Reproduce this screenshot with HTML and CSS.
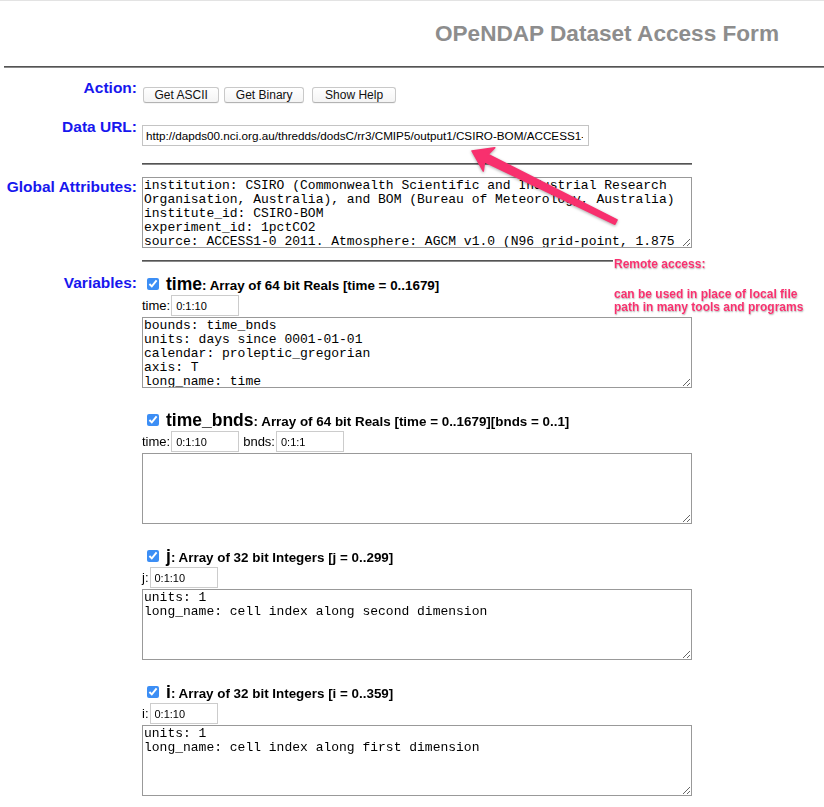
FILE: index.html
```html
<!DOCTYPE html>
<html lang="en">
<head>
<meta charset="utf-8">
<title>OPeNDAP Dataset Access Form</title>
<link rel="stylesheet" href="styles.css">
</head>
<body>
<div class="topline"></div>
<div class="page">
  <h1 class="title">OPeNDAP Dataset Access Form</h1>
  <hr class="rule rule-top">

  <form class="form">
    <div class="row row-action">
      <div class="label">Action:</div>
      <div class="content actions">
        <button type="button" class="btn btn-ascii">Get ASCII</button>
        <button type="button" class="btn btn-binary">Get Binary</button>
        <button type="button" class="btn btn-help">Show Help</button>
      </div>
    </div>

    <div class="row row-url">
      <div class="label">Data URL:</div>
      <div class="content url-wrap">
        <input class="url" type="text" value="http://dapds00.nci.org.au/thredds/dodsC/rr3/CMIP5/output1/CSIRO-BOM/ACCESS1-0/1pctCO2/fx/ocean/fx/r0i0p0/v20120412/areacello/areacello_fx_ACCESS1-0_1pctCO2_r0i0p0.nc">
      </div>
    </div>

    <hr class="rule rule-sep">

    <div class="row row-global">
      <div class="label label-global">Global Attributes:</div>
      <div class="content">
        <textarea class="attrs attrs-global">institution: CSIRO (Commonwealth Scientific and Industrial Research Organisation, Australia), and BOM (Bureau of Meteorology, Australia)
institute_id: CSIRO-BOM
experiment_id: 1pctCO2
source: ACCESS1-0 2011. Atmosphere: AGCM v1.0 (N96 grid-point, 1.875 degrees EW x approx 1.25 degree NS, 38 levels); ocean: NOAA/GFDL MOM4p1 (nominal 1.0 degree EW x 1.0 degrees NS, tripolar north of 65N, equatorial refinement to 1/3 degree from 10S to 10N, cosine dependent NS south of 25S, 50 levels); sea ice: CICE4.1; land: MOSES2 (1.875 degree EW x 1.25 degree NS, 4 levels)
model_id: ACCESS1-0
forcing: GHG, Oz, SA, Sl, Vl, BC, OC</textarea>
      </div>
    </div>

    <hr class="rule rule-sep rule-sep2">

    <div class="row row-vars">
      <div class="label">Variables:</div>
      <div class="content vars">
        <div class="var">
          <div class="var-head"><input class="chk" type="checkbox" checked><span class="vname">time</span>: Array of 64 bit Reals [time = 0..1679]</div>
          <div class="dims"><label class="dim">time:<input class="dim-in" type="text" value="0:1:10"></label></div>
          <textarea class="attrs">bounds: time_bnds
units: days since 0001-01-01
calendar: proleptic_gregorian
axis: T
long_name: time
standard_name: time</textarea>
        </div>

        <div class="var">
          <div class="var-head"><input class="chk" type="checkbox" checked><span class="vname">time_bnds</span>: Array of 64 bit Reals [time = 0..1679][bnds = 0..1]</div>
          <div class="dims"><label class="dim">time:<input class="dim-in" type="text" value="0:1:10"></label><label class="dim">bnds:<input class="dim-in" type="text" value="0:1:1"></label></div>
          <textarea class="attrs"></textarea>
        </div>

        <div class="var">
          <div class="var-head"><input class="chk" type="checkbox" checked><span class="vname">j</span>: Array of 32 bit Integers [j = 0..299]</div>
          <div class="dims"><label class="dim">j:<input class="dim-in" type="text" value="0:1:10"></label></div>
          <textarea class="attrs">units: 1
long_name: cell index along second dimension</textarea>
        </div>

        <div class="var">
          <div class="var-head"><input class="chk" type="checkbox" checked><span class="vname">i</span>: Array of 32 bit Integers [i = 0..359]</div>
          <div class="dims"><label class="dim">i:<input class="dim-in" type="text" value="0:1:10"></label></div>
          <textarea class="attrs">units: 1
long_name: cell index along first dimension</textarea>
        </div>
      </div>
    </div>
  </form>

  <svg class="arrow" viewBox="460 140 170 90" width="170" height="90" aria-hidden="true">
    <polygon points="472,150 494.8,146.7 488.1,153.5 617.1,218.8 614.9,223.2 484.5,160.7 483.3,170.1" fill="#f8306e" stroke="#f8306e" stroke-width="1.5" stroke-linejoin="round"/>
  </svg>

  <div class="note">
    <p class="note-title">Remote access:</p>
    <p class="note-body">can be used in place of local file<br>path in many tools and programs</p>
  </div>
</div>
</body>
</html>
```

FILE: styles.css
```css
* {
  box-sizing: border-box;
}

html,
body {
  margin: 0;
  padding: 0;
  background: #ffffff;
}

body {
  font-family: "Liberation Sans", Arial, Helvetica, sans-serif;
  color: #000000;
}

.topline {
  height: 1px;
  background: #e3e3e3;
}

.page {
  position: relative;
  width: 824px;
  min-height: 806px;
  padding-top: 20px;
}

.title {
  margin: 0 45px 0 0;
  text-align: right;
  font-size: 22.6px;
  line-height: 26px;
  font-weight: bold;
  color: #8d8d8d;
}

.rule {
  height: 2px;
  border: 0;
  border-top: 1px solid #545454;
  border-bottom: 1px solid #8a8a8a;
  margin: 0;
}

.rule-top {
  margin: 19px 0 0 4px;
}

.rule-sep {
  width: 550px;
  margin: 17px 0 0 142px;
}

.rule-sep2 {
  margin-top: 12px;
}

.form {
  margin: 0;
}

.row {
  display: flex;
  column-gap: 5px;
  align-items: flex-start;
}

.label {
  flex: 0 0 137px;
  text-align: right;
  font-size: 15.5px;
  line-height: 18px;
  font-weight: bold;
  color: #1717ee;
  white-space: nowrap;
}

.content {
  flex: 0 0 auto;
}

.row-action {
  margin-top: 11px;
}

.actions {
  display: flex;
  padding-top: 8px;
}

.btn {
  height: 16px;
  padding: 0 10.5px;
  margin: 0;
  font-family: "Liberation Sans", Arial, Helvetica, sans-serif;
  font-size: 12px;
  line-height: 14px;
  color: #111111;
  background: linear-gradient(#ffffff, #f4f4f4);
  border: 1px solid #c9c9c9;
  border-bottom-color: #b3b3b3;
  border-radius: 3px;
  box-shadow: 0 1px 0 rgba(0, 0, 0, 0.04);
}

.btn-ascii {
  margin-left: 1px;
}

.btn-binary {
  margin-left: 5px;
}

.btn-help {
  margin-left: 8px;
  padding: 0 12px;
}

.row-url {
  margin-top: 15px;
}

.url-wrap {
  padding-top: 7px;
}

.url {
  display: block;
  width: 447px;
  height: 21px;
  margin: 0;
  padding: 0 5px 0 3px;
  border: 1px solid #c4c4c4;
  font-family: "Liberation Sans", Arial, Helvetica, sans-serif;
  font-size: 11.7px;
  color: #000000;
  background: #ffffff;
}

.row-global {
  margin-top: 12px;
}

.label-global {
  padding-top: 1px;
}

.attrs {
  display: block;
  width: 550px;
  height: 71px;
  margin: 1px 0 0 0;
  padding: 1px;
  border: 1px solid #999999;
  font-family: "Liberation Mono", "Courier New", monospace;
  font-size: 13px;
  line-height: 14px;
  color: #000000;
  background: #ffffff;
  resize: both;
  scrollbar-width: none;
}

.attrs-global {
  margin-top: 0;
}

.row-vars {
  margin-top: 12px;
}

.var + .var {
  margin-top: 22px;
}

.var-head {
  padding-top: 3px;
  line-height: 18px;
  font-size: 13.4px;
  font-weight: bold;
  white-space: nowrap;
  color: #000000;
}

.chk {
  width: 12px;
  height: 12px;
  margin: 0 7px 0 5px;
  vertical-align: baseline;
  accent-color: #3c8ef5;
}

.vname {
  font-size: 17.5px;
  line-height: 0;
}

.dims {
  display: flex;
  align-items: center;
  column-gap: 4px;
  height: 21px;
  font-size: 13px;
}

.dim {
  display: inline-flex;
  align-items: center;
}

.dim-in {
  width: 68px;
  height: 21px;
  margin: 0 0 0 1px;
  padding: 0 4px;
  border: 1px solid #cccccc;
  font-family: "Liberation Sans", Arial, Helvetica, sans-serif;
  font-size: 11px;
  color: #000000;
  background: #ffffff;
}

.arrow {
  position: absolute;
  left: 460px;
  top: 140px;
  filter: drop-shadow(0 1px 1.5px rgba(0, 0, 0, 0.35));
}

.note {
  position: absolute;
  left: 613px;
  top: 255.5px;
  font-family: "Liberation Sans", Arial, Helvetica, sans-serif;
  font-size: 12px;
  font-weight: bold;
  color: #f8306e;
  text-shadow: 0 0 1px #ffffff, 0.5px 1px 1.5px rgba(0, 0, 0, 0.35);
}

.note p {
  margin: 0;
}

.note-title {
  display: inline-block;
  padding: 0 3px 0 1px;
  line-height: 14px;
  background: #ffffff;
}

.note-body {
  margin-top: 17.5px !important;
  padding-left: 1px;
  line-height: 13px;
  white-space: nowrap;
}
```
